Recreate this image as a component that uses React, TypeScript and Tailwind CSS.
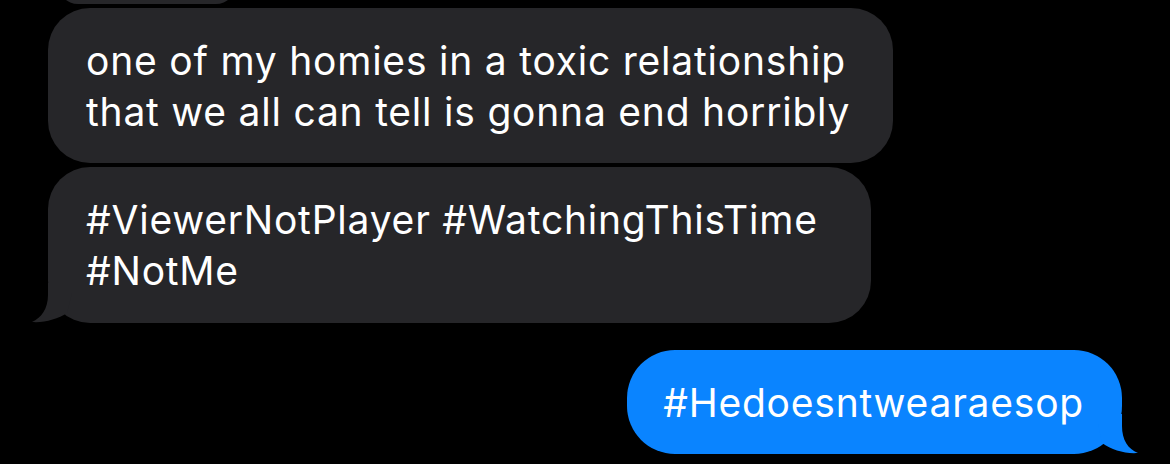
import React from 'react';

const font = { fontFamily: 'Inter, "Noto Sans", sans-serif' };

function LeftTail() {
  return (
    <svg className="absolute left-[-16px] bottom-0" width="40" height="40" viewBox="0 0 40 40">
      <path d="M16 0 L16 12 C16 26 9 35 0 39 C12 40 26 36 35 30 L40 10 L30 0 Z" fill="#262629" />
    </svg>
  );
}

function RightTail() {
  return (
    <svg className="absolute right-[-16px] bottom-0" width="40" height="40" viewBox="0 0 40 40">
      <path d="M24 0 L24 12 C24 26 30 35 40 39 C27 40 14 36 4 29 L0 10 L10 0 Z" fill="#0a84ff" />
    </svg>
  );
}

export default function App() {
  return (
    <div className="w-[1170px] h-[464px] bg-black overflow-hidden flex flex-col text-white text-[39px] leading-[51px] tracking-[0.02em]" style={font}>
      {/* tail end of the previous message, scrolled off the top */}
      <div className="ml-[58px] -mt-[36px] w-[178px] h-[40px] rounded-[40px] bg-[#262629] shrink-0" />

      <div className="ml-[48px] mt-[4px] w-[845px] rounded-[42px] bg-[#262629] pl-[38px] pt-[27px] pb-[26px] whitespace-nowrap shrink-0">
        <div>one of my homies in a toxic relationship</div>
        <div>that we all can tell is gonna end horribly</div>
      </div>

      <div className="relative ml-[48px] mt-[4px] w-[823px] rounded-[42px] bg-[#262629] pl-[38px] pt-[27px] pb-[27px] whitespace-nowrap shrink-0">
        <div>#ViewerNotPlayer #WatchingThisTime</div>
        <div>#NotMe</div>
        <LeftTail />
      </div>

      <div className="relative self-end mr-[48px] mt-[27px] rounded-[48px] bg-[#0a84ff] pl-[36px] pr-[38px] pt-[27px] pb-[26px] whitespace-nowrap shrink-0">
        #Hedoesntwearaesop
        <RightTail />
      </div>
    </div>
  );
}
